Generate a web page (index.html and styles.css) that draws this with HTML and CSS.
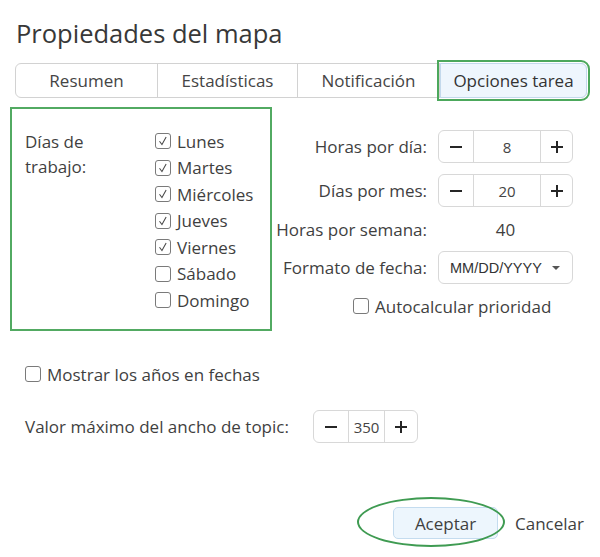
FILE: index.html
```html
<!DOCTYPE html>
<html lang="es">
<head>
  <meta charset="UTF-8">
  <title>Propiedades del mapa</title>
  <link rel="stylesheet" href="styles.css">
</head>
<body>
  <div class="dialog">
    <h1 class="title">Propiedades del mapa</h1>

    <div class="tabs">
      <div class="tab tab-1">Resumen</div>
      <div class="tab tab-2">Estadísticas</div>
      <div class="tab tab-3">Notificación</div>
      <div class="tab tab-4 active">Opciones tarea</div>
    </div>

    <div class="content">
      <div class="days-box">
        <div class="days-label">Días de<br>trabajo:</div>
        <div class="days-list">
          <label class="check-row"><span class="box checked"><svg viewBox="0 0 16 16"><path d="M4 8.3 L6.8 12 L11.6 3.4" /></svg></span>Lunes</label>
          <label class="check-row"><span class="box checked"><svg viewBox="0 0 16 16"><path d="M4 8.3 L6.8 12 L11.6 3.4" /></svg></span>Martes</label>
          <label class="check-row"><span class="box checked"><svg viewBox="0 0 16 16"><path d="M4 8.3 L6.8 12 L11.6 3.4" /></svg></span>Miércoles</label>
          <label class="check-row"><span class="box checked"><svg viewBox="0 0 16 16"><path d="M4 8.3 L6.8 12 L11.6 3.4" /></svg></span>Jueves</label>
          <label class="check-row"><span class="box checked"><svg viewBox="0 0 16 16"><path d="M4 8.3 L6.8 12 L11.6 3.4" /></svg></span>Viernes</label>
          <label class="check-row"><span class="box"></span>Sábado</label>
          <label class="check-row"><span class="box"></span>Domingo</label>
        </div>
      </div>

      <div class="options">
        <div class="opt-grid">
          <div class="opt-label">Horas por día:</div>
          <div class="stepper wide">
            <span class="step-btn minus"><svg viewBox="0 0 12 12"><path d="M0 6 H12" /></svg></span>
            <span class="step-val">8</span>
            <span class="step-btn plus"><svg viewBox="0 0 12 12"><path d="M0 6 H12 M6 0 V12" /></svg></span>
          </div>

          <div class="opt-label">Días por mes:</div>
          <div class="stepper wide">
            <span class="step-btn minus"><svg viewBox="0 0 12 12"><path d="M0 6 H12" /></svg></span>
            <span class="step-val">20</span>
            <span class="step-btn plus"><svg viewBox="0 0 12 12"><path d="M0 6 H12 M6 0 V12" /></svg></span>
          </div>

          <div class="opt-label short">Horas por semana:</div>
          <div class="plain-val short">40</div>

          <div class="opt-label">Formato de fecha:</div>
          <div class="select">
            <span>MM/DD/YYYY</span>
            <span class="caret"></span>
          </div>
        </div>
        <label class="check-row autocalc"><span class="box"></span>Autocalcular prioridad</label>
      </div>
    </div>

    <label class="check-row years"><span class="box"></span>Mostrar los años en fechas</label>

    <div class="topic-row">
      <span class="topic-label">Valor máximo del ancho de topic:</span>
      <div class="stepper narrow">
        <span class="step-btn minus"><svg viewBox="0 0 12 12"><path d="M0 6 H12" /></svg></span>
        <span class="step-val">350</span>
        <span class="step-btn plus"><svg viewBox="0 0 12 12"><path d="M0 6 H12 M6 0 V12" /></svg></span>
      </div>
    </div>

    <div class="footer">
      <div class="accept-wrap">
        <span class="ring"></span>
        <button class="btn-accept">Aceptar</button>
      </div>
      <button class="btn-cancel">Cancelar</button>
    </div>
  </div>
</body>
</html>
```

FILE: styles.css
```css
html, body { margin: 0; padding: 0; background: #ffffff; }
body {
  font-family: "Open Sans", "Noto Sans", sans-serif;
  font-size: 17px;
  color: #3f3f3f;
}

.dialog {
  height: 555px;
  border-bottom: 2px solid #262626;
  padding: 0 13px 0 15px;
  box-sizing: content-box;
  position: relative;
}

.title {
  margin: 17px 0 0 1px;
  font-size: 25.5px;
  font-weight: normal;
  line-height: 32px;
  color: #383838;
}

/* tabs */
.tabs {
  display: flex;
  margin-top: 14px;
  height: 35px;
  border: 1px solid #d2d2d2;
  border-radius: 6px;
  box-sizing: border-box;
}
.tab {
  display: flex;
  align-items: center;
  justify-content: center;
  border-right: 1px solid #d2d2d2;
  color: #454545;
}
.tab-1 { width: 141px; }
.tab-2 { width: 139px; }
.tab-3 { width: 141px; }
.tab-4 { flex: 1; border-right: none; }
.tab.active {
  background: #eef6fd;
  border: 1px solid #c3d9ec;
  border-radius: 0 6px 6px 0;
  margin: -1px -1px -1px 0;
  outline: 2px solid #4ca85c;
  outline-offset: 1px;
  color: #333;
}

/* main area */
.content {
  display: flex;
  margin: 9px 0 0 -5px;
}
.days-box {
  width: 262px;
  height: 224px;
  box-sizing: border-box;
  border: 2px solid #52aa62;
  display: flex;
  padding: 19px 0 0 13px;
}
.days-label {
  width: 130px;
  line-height: 25px;
  margin-top: 1px;
}
.days-list { display: flex; flex-direction: column; }

.check-row {
  display: flex;
  align-items: center;
  height: 26.5px;
  gap: 6px;
  white-space: nowrap;
}
.box {
  width: 16px;
  height: 16px;
  box-sizing: border-box;
  border: 1px solid #7a7a7a;
  border-radius: 3px;
  display: flex;
  align-items: center;
  justify-content: center;
  flex-shrink: 0;
}
.box svg { width: 14px; height: 14px; }
.box path { fill: none; stroke: #4a4a4a; stroke-width: 1.2; }

.options { padding-top: 23px; }
.opt-grid {
  display: grid;
  grid-template-columns: 155px 135px;
  grid-template-rows: 33px 33px 22px 33px;
  column-gap: 11px;
  row-gap: 11px;
  align-items: center;
}
.opt-label { text-align: right; white-space: nowrap; }
.plain-val { text-align: center; }

.stepper {
  display: flex;
  height: 33px;
  border: 1px solid #d8d8d8;
  border-radius: 6px;
  box-sizing: border-box;
}
.step-btn {
  display: flex;
  align-items: center;
  justify-content: center;
}
.step-btn svg { width: 12px; height: 12px; }
.step-btn path { stroke: #262626; stroke-width: 2; fill: none; }
.step-val {
  display: flex;
  align-items: center;
  justify-content: center;
  border-left: 1px solid #d8d8d8;
  border-right: 1px solid #d8d8d8;
  font-size: 15px;
  color: #444;
}
.wide .step-btn.minus { width: 34px; }
.wide .step-val { width: 66px; }
.wide .step-btn.plus { flex: 1; }

.select {
  height: 33px;
  border: 1px solid #d8d8d8;
  border-radius: 6px;
  box-sizing: border-box;
  display: flex;
  align-items: center;
  justify-content: space-between;
  padding: 0 12px 0 11px;
  font-family: "Liberation Sans", Arial, sans-serif;
  font-size: 14.5px;
  color: #333;
}
.caret {
  width: 0;
  height: 0;
  border-left: 4px solid transparent;
  border-right: 4px solid transparent;
  border-top: 4px solid #555;
}

.check-row.autocalc {
  margin: 11px 0 0 81px;
  height: 22px;
}

.check-row.years {
  margin: 32px 0 0 10px;
  height: 22px;
}

.topic-row {
  display: flex;
  align-items: center;
  margin: 25px 0 0 10px;
}
.topic-label { width: 288px; white-space: nowrap; }
.stepper.narrow { width: 105px; }
.narrow .step-btn.minus { width: 34px; }
.narrow .step-val { width: 35px; }
.narrow .step-btn.plus { flex: 1; }

/* buttons */
.footer {
  display: flex;
  justify-content: flex-end;
  align-items: center;
  margin-top: 64px;
  padding-right: 3px;
}
.accept-wrap { position: relative; }
.btn-accept {
  width: 105px;
  height: 32px;
  background: #edf6fd;
  border: 1px solid #c4dcef;
  border-radius: 5px;
  font-family: inherit;
  font-size: 17px;
  color: #3f3f3f;
  display: block;
}
.ring {
  position: absolute;
  left: -36px;
  top: -10px;
  width: 148px;
  height: 50px;
  box-sizing: border-box;
  border: 2px solid #3f9b52;
  border-radius: 50%;
  pointer-events: none;
}
.btn-cancel {
  background: none;
  border: none;
  font-family: inherit;
  font-size: 17px;
  color: #3f3f3f;
  padding: 0;
  margin-left: 17px;
}
```
